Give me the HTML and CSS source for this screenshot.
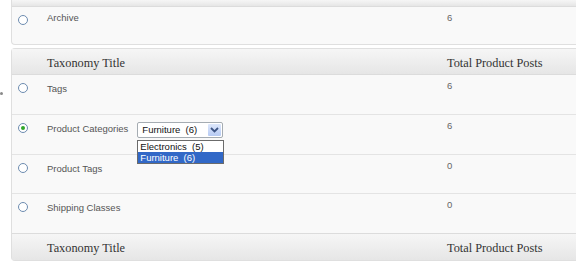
FILE: index.html
```html
<!DOCTYPE html>
<html lang="en">
<head>
    <meta charset="UTF-8">
    <title>Taxonomies</title>
    <link rel="stylesheet" href="styles.css">
</head>
<body>
    <span class="edge-dot"></span>

    <div class="tax-table first">
        <div class="row head top-strip"></div>
        <div class="row archive">
            <div class="cell check"><span class="radio"></span></div>
            <div class="cell name">Archive</div>
            <div class="cell count">6</div>
        </div>
    </div>

    <div class="tax-table second">
        <div class="row head">
            <div class="cell check"></div>
            <div class="cell title">Taxonomy Title</div>
            <div class="cell title">Total Product Posts</div>
        </div>
        <div class="row">
            <div class="cell check"><span class="radio"></span></div>
            <div class="cell name">Tags</div>
            <div class="cell count">6</div>
        </div>
        <div class="row">
            <div class="cell check"><span class="radio checked"></span></div>
            <div class="cell name">
                Product Categories
                <div class="select">
                    <span class="select-value">Furniture&nbsp; (6)</span>
                    <span class="select-arrow">
                        <svg width="9" height="6" viewBox="0 0 9 6"><path d="M1 1 L4.5 4.5 L8 1" fill="none" stroke="#3d5584" stroke-width="1.8"/></svg>
                    </span>
                    <ul class="select-list">
                        <li>Electronics&nbsp; (5)</li>
                        <li class="active">Furniture&nbsp; (6)</li>
                    </ul>
                </div>
            </div>
            <div class="cell count">6</div>
        </div>
        <div class="row short">
            <div class="cell check"><span class="radio"></span></div>
            <div class="cell name">Product Tags</div>
            <div class="cell count">0</div>
        </div>
        <div class="row">
            <div class="cell check"><span class="radio"></span></div>
            <div class="cell name">Shipping Classes</div>
            <div class="cell count">0</div>
        </div>
        <div class="row head foot">
            <div class="cell check"></div>
            <div class="cell title">Taxonomy Title</div>
            <div class="cell title">Total Product Posts</div>
        </div>
    </div>
</body>
</html>
```

FILE: styles.css
```css
body { margin: 0; padding-left: 11px; background: #fff; font-family: "Liberation Sans", Arial, sans-serif; color: #555; }

.edge-dot { position: absolute; left: 0; top: 92px; width: 3px; height: 3px; border-radius: 50%; background: #8a8a8a; }

.tax-table { border: 1px solid #dfdfdf; border-right: none; background: #f9f9f9; }
.tax-table.first { border-top: none; border-radius: 0 0 0 4px; }
.tax-table.second { margin-top: 3px; border-radius: 4px 0 0 4px; }

.row { display: grid; grid-template-columns: 35px 400px 1fr; height: 39px; border-top: 1px solid #e4e4e4; }
.row:first-child { border-top: none; }
.row.top-strip { display: block; height: 6px; }
.row.archive { height: 37px; }
.row.short { height: 38px; }

.head { height: 25px; background: linear-gradient(#f6f6f6, #e6e6e6); border-bottom: 1px solid #dcdcdc; }
.head + .row { border-top: none; }
.foot { border-bottom: none; border-top: 1px solid #dcdcdc; height: 26px; }

.cell { padding-top: 6px; }
.check { padding-left: 6px; padding-top: 8px; }
.name { font-size: 9.5px; line-height: 12px; padding-top: 8px; display: flex; align-items: flex-start; gap: 9px; }
.count { font-size: 9.5px; line-height: 12px; padding-top: 5px; color: #666; }
.title { font-family: "Liberation Serif", Georgia, serif; font-size: 12.3px; color: #333; line-height: 14px; padding-top: 7px; }

.archive .name { padding-top: 5px; }
.archive .count { padding-top: 5px; }
.archive .check { padding-top: 8px; }

.radio { display: block; width: 8px; height: 8px; border: 1px solid #6d8cb0; border-radius: 50%; background: #fff; position: relative; }
.radio.checked::after { content: ""; position: absolute; left: 2px; top: 2px; width: 4px; height: 4px; border-radius: 50%; background: #2fa62a; }

.select { position: relative; margin-top: -1px; width: 84px; height: 14px; border: 1px solid #a5acb2; border-radius: 2px; background: #fff; display: flex; align-items: center; justify-content: space-between; color: #111; }
.select-value { padding-left: 4px; font-size: 9.5px; }
.select-arrow { width: 13px; height: 12px; margin-right: 1px; background: linear-gradient(#dde7fb, #b7cbf4); border-radius: 1px; display: flex; align-items: center; justify-content: center; }

.select-list { position: absolute; left: -1px; top: 17px; width: 85px; margin: 0; padding: 0; list-style: none; background: #fff; border: 1px solid #6b6b6b; }
.select-list li { height: 11px; line-height: 11px; padding-left: 2px; font-size: 9.5px; color: #111; }
.select-list li.active { background: #3168c7; color: #fff; }
```
